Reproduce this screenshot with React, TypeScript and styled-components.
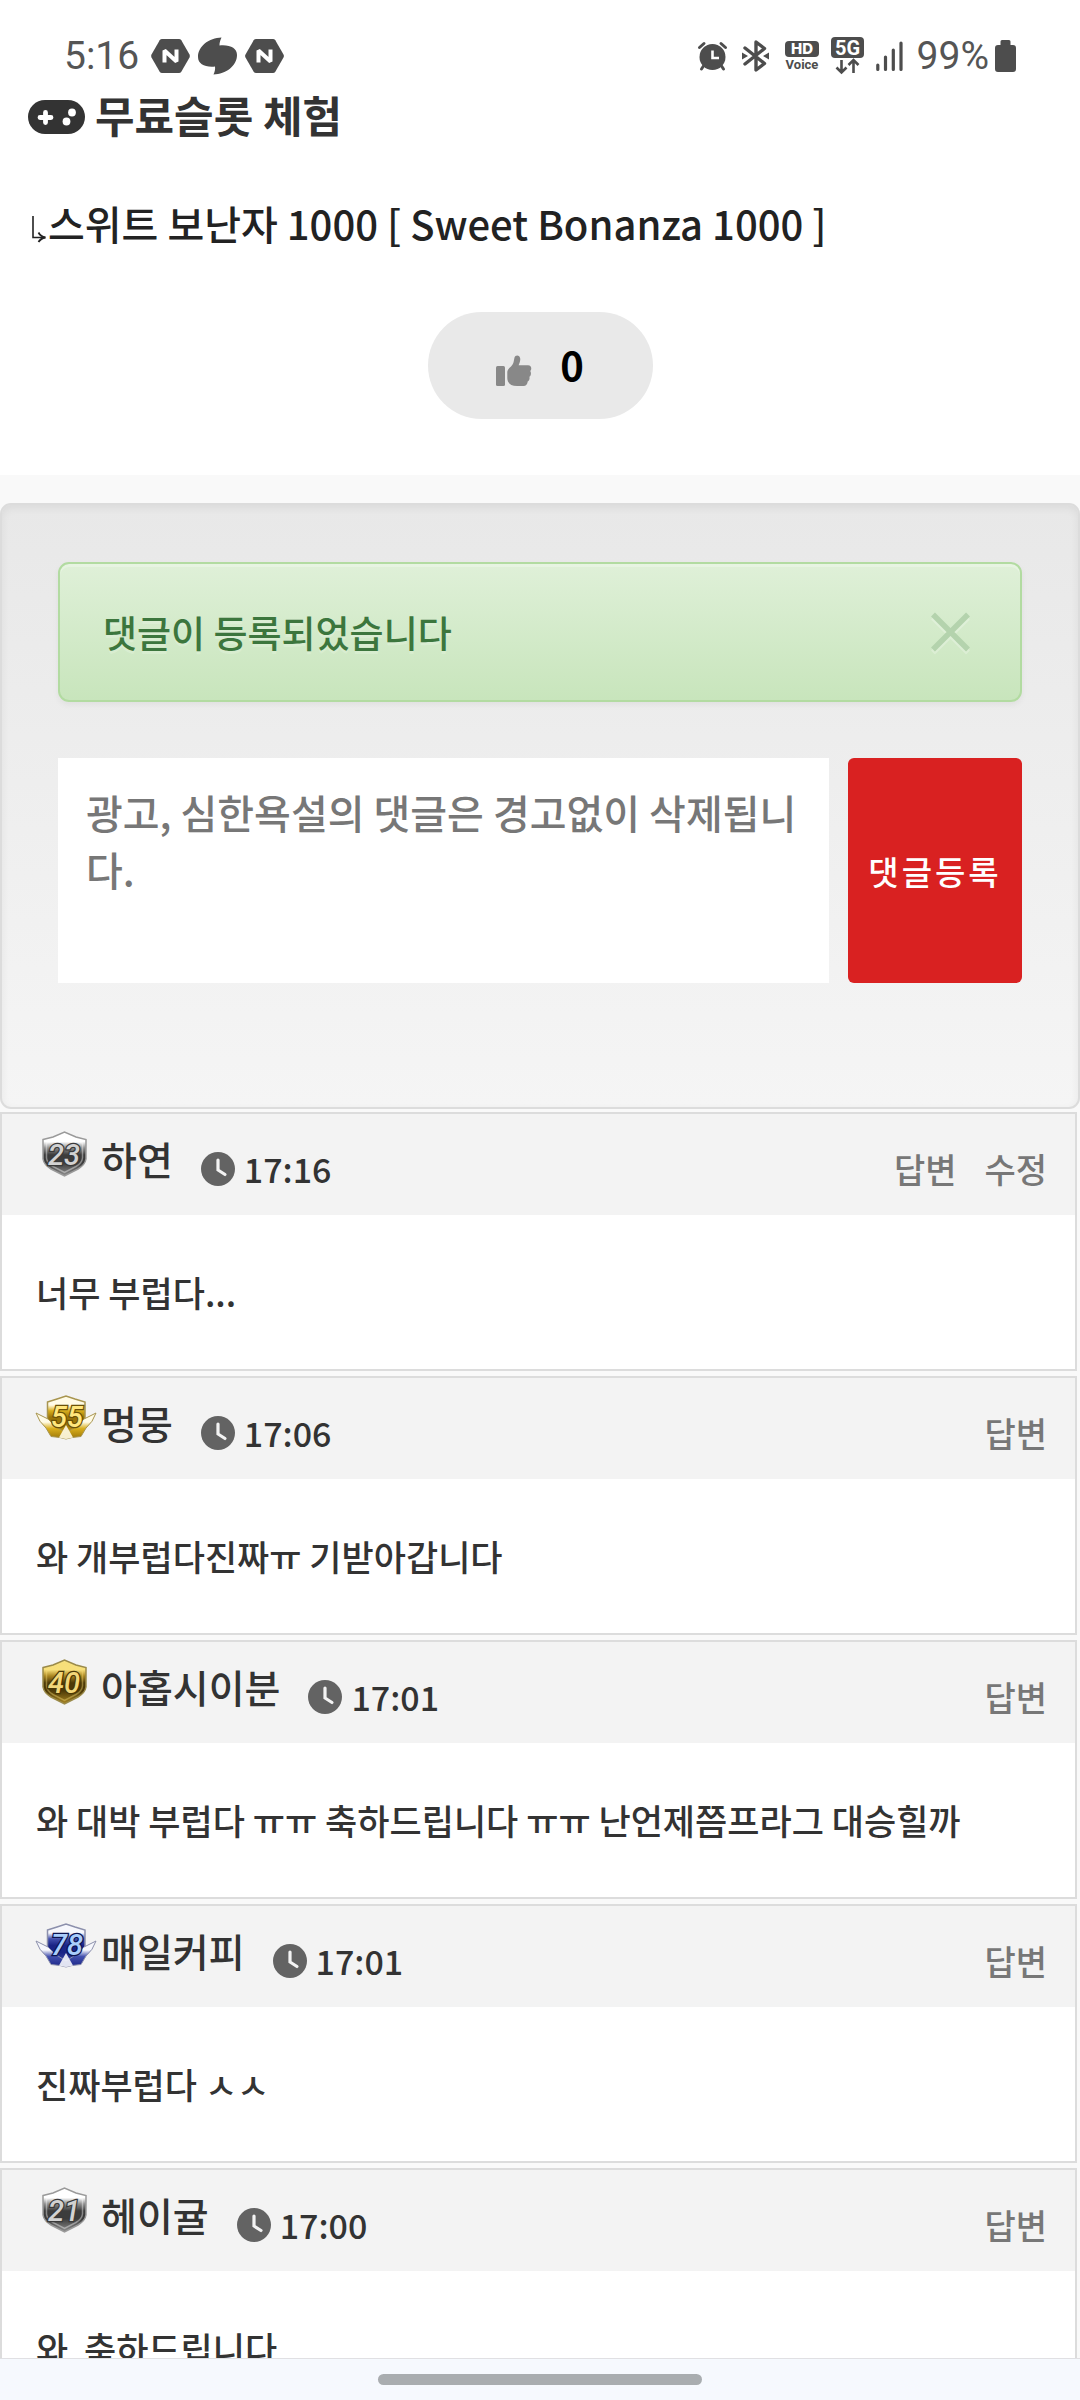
import React from "react";
import styled, { createGlobalStyle } from "styled-components";

const GlobalStyle = createGlobalStyle`
  *, *::before, *::after { box-sizing: border-box; }
  body {
    margin: 0;
    background: #f9f9f9;
    color: #333;
    font-family: "Noto Sans CJK KR", "Noto Sans", sans-serif;
    font-weight: 500;
  }
  button, textarea { font: inherit; }
`;

const Screen = styled.div`
  display: flex;
  flex-direction: column;
  height: 100vh;
  overflow: hidden;
`;

const Scroller = styled.main`
  flex: 1;
  min-height: 0;
  overflow: hidden;
`;

/* ---------- status bar ---------- */

const StatusBar = styled.header`
  display: flex;
  justify-content: space-between;
  align-items: center;
  height: 80px;
  padding: 32px 64px 0;
  background: #fff;
  color: #555;
  font-family: Roboto, sans-serif;
  font-size: 39px;
  font-weight: 400;
  line-height: 40px;
`;

const StatusGroup = styled.div<{ $gap: number }>`
  display: flex;
  align-items: center;
  gap: ${(p) => p.$gap}px;
`;

const Glyph = styled.svg`
  display: block;
  flex: none;
  overflow: visible;
`;

const HexN = () => (
  <Glyph width="39" height="36" viewBox="0 0 39 36" aria-hidden="true">
    <path
      d="M11 1h17q1.500 0 2.300 1.300L38.500 16.500q.8 1.500 0 3L30.300 33.700Q29.500 35 28 35H11q-1.500 0-2.300-1.300L.5 19.500q-.8-1.500 0-3L8.700 2.300Q9.500 1 11 1z"
      fill="#4d4d4d"
    />
    <path d="M13.500 24.500V12.500L25.500 23.500V11.500" fill="none" stroke="#fff" strokeWidth="4" strokeLinejoin="bevel" />
  </Glyph>
);

const Swirl = () => (
  <Glyph width="39" height="38" viewBox="0 0 39 38" aria-hidden="true">
    <path
      d="M23.500.5C22 3.500 21.500 6 21.500 8.500C32 7.500 39 11 39 18C39 29 28 37 15.500 37.500C17 34.500 17.300 32 17 29.500C7 30.500 0 27 0 20C0 9 11 1 23.500.5z"
      fill="#4d4d4d"
    />
  </Glyph>
);

const AlarmIcon = () => (
  <Glyph width="32" height="30" viewBox="0 0 32 30" aria-hidden="true">
    <g fill="none" stroke="#4d4d4d" strokeWidth="3" strokeLinecap="round">
      <path d="M1.500 6.500L6 2.500M27.500 6.500L23 2.500M5.500 25L3.500 28M23.500 25L25.500 28" />
    </g>
    <circle cx="14.500" cy="16" r="13" fill="#4d4d4d" />
    <path d="M14.500 9.500V17H21" fill="none" stroke="#fff" strokeWidth="2.600" />
  </Glyph>
);

const BluetoothIcon = () => (
  <Glyph width="31" height="32" viewBox="0 0 31 32" aria-hidden="true">
    <path
      d="M3 8L22.500 23.500L14 30V2L22.500 8.500L3 24"
      fill="none"
      stroke="#4d4d4d"
      strokeWidth="3.400"
      strokeLinejoin="round"
      strokeLinecap="round"
    />
    <path d="M0 12.500L6 16L0 19.500zM27 12.500L21 16L27 19.500z" fill="#4d4d4d" />
  </Glyph>
);

const HdVoiceIcon = () => (
  <Glyph width="34" height="30" viewBox="0 0 34 30" role="img" aria-label="HD Voice">
    <rect width="34" height="16" rx="4" fill="#4d4d4d" />
    <text x="17" y="13" textAnchor="middle" fontFamily="Inter, Roboto" fontSize="15" fontWeight="800" fill="#fff">
      HD
    </text>
    <text x="17" y="28" textAnchor="middle" fontFamily="Roboto, sans-serif" fontSize="13" fontWeight="700" fill="#4d4d4d">
      Voice
    </text>
  </Glyph>
);

const FiveGIcon = () => (
  <Glyph width="33" height="40" viewBox="0 0 33 40" role="img" aria-label="5G">
    <rect y="1" width="33" height="21" rx="4" fill="#4d4d4d" />
    <text x="16.500" y="18.500" textAnchor="middle" fontFamily="Roboto, sans-serif" fontSize="20" fontWeight="700" fill="#fff">
      5G
    </text>
    <path
      d="M10.500 24V36M5.500 31.500L10.500 36.500L15.500 31.500M22.500 37V25M17.500 29L22.500 24L27.500 29"
      fill="none"
      stroke="#4d4d4d"
      strokeWidth="2.600"
    />
  </Glyph>
);

const SignalIcon = () => (
  <Glyph width="29" height="30" viewBox="0 0 29 30" aria-hidden="true">
    <path
      d="M1.800 28.500V24M9.500 28.500V16M17.300 28.500V9M25 28.500V2"
      stroke="#4d4d4d"
      strokeWidth="3.200"
      strokeLinecap="round"
    />
  </Glyph>
);

const BatteryIcon = () => (
  <Glyph width="21" height="32" viewBox="0 0 21 32" aria-hidden="true">
    <path
      d="M7 0h7q1.500 0 1.500 1.500V5H18q3 0 3 3v21q0 3-3 3H3q-3 0-3-3V8q0-3 3-3h2.500V1.500Q5.500 0 7 0z"
      fill="#4d4d4d"
    />
  </Glyph>
);

/* ---------- post ---------- */

const Post = styled.section`
  padding: 0 28px 56px;
  background: #fff;
`;

const BoardTitle = styled.h1`
  display: flex;
  align-items: center;
  gap: 10px;
  margin: 0;
  font-size: 43px;
  font-weight: 700;
  line-height: 68px;
`;

const PadIcon = () => (
  <Glyph width="57" height="40" viewBox="0 0 57 40" aria-hidden="true">
    <rect y="6" width="57" height="34" rx="17" fill="#333" />
    <path d="M17.500 18.500V28.500M12 23.500H23" stroke="#fff" strokeWidth="4.800" strokeLinecap="round" />
    <circle cx="44" cy="18.500" r="3.900" fill="#fff" />
    <circle cx="38.500" cy="27.500" r="3.900" fill="#fff" />
  </Glyph>
);

const PostTitle = styled.h2`
  display: flex;
  align-items: center;
  margin: 45px 0 59px;
  padding-left: 4px;
  color: #222;
  font-size: 40px;
  font-weight: 500;
  line-height: 60px;
`;

const ReplyArrow = () => (
  <Glyph width="16" height="40" viewBox="0 0 16 40" aria-hidden="true">
    <path d="M1 13V34.500H13" fill="none" stroke="#222" strokeWidth="1.600" />
    <path d="M6.500 29.500Q8.500 33.500 13.500 34.500Q8.500 35.500 6.500 39" fill="none" stroke="#222" strokeWidth="1.800" />
  </Glyph>
);

const LikeButton = styled.button`
  display: flex;
  justify-content: center;
  align-items: center;
  gap: 28px;
  width: 225px;
  height: 107px;
  margin: 0 auto;
  padding: 0;
  border: 0;
  border-radius: 54px;
  background: #e9e9e9;
  color: #000;
  font-size: 40px;
  font-weight: 700;
  line-height: 54px;
`;

const LikeCount = styled.span`
  padding-bottom: 4px;
`;

const ThumbIcon = () => (
  <Glyph width="36" height="41" viewBox="0 -10 36 41" aria-hidden="true">
    <rect y="11" width="9" height="20" rx="1.500" fill="#888" />
    <path
      d="M11.300 17C11.500 13 16.500 12 17.600 7L18.500 2.500C19.200-.3 24-.5 24.300 4C24.300 7 23 9 22.600 10.300H32C36 10.300 35.800 15 34.200 16C35.500 17.500 35 21 33.400 21.700C34 24 33 26 31.700 26.500C31.500 29 30 31 27.500 31H21C15 31 11.300 28 11.300 23z"
      fill="#888"
    />
  </Glyph>
);

/* ---------- write form ---------- */

const Well = styled.section`
  margin-top: 28px;
  padding: 57px 56px 124px;
  border: 2px solid #dcdcdc;
  border-radius: 11px;
  background: linear-gradient(to bottom, #e8e8e8 0%, #f5f5f5 100%);
  box-shadow: inset 0 3px 9px rgba(0, 0, 0, 0.06);
`;

const Alert = styled.div`
  display: flex;
  justify-content: space-between;
  align-items: center;
  height: 140px;
  margin-bottom: 56px;
  padding: 0 49px 0 43px;
  border: 2px solid #b2dba1;
  border-radius: 11px;
  background: linear-gradient(to bottom, #dff0d8 0%, #c8e5bc 100%);
  box-shadow: inset 0 3px 0 rgba(255, 255, 255, 0.25), 0 3px 6px rgba(0, 0, 0, 0.05);
  color: #3c763d;
  font-size: 37px;
  line-height: 54px;
  text-shadow: 0 3px 0 rgba(255, 255, 255, 0.2);
`;

const CloseButton = styled.button`
  display: flex;
  padding: 0;
  border: 0;
  background: none;
`;

const CloseIcon = () => (
  <Glyph width="41" height="41" viewBox="0 0 41 41" aria-hidden="true">
    <path d="M3 5.500L38 40.500M38 5.500L3 40.500" stroke="#fff" strokeOpacity=".25" strokeWidth="5.500" />
    <path d="M3 2.500L38 37.500M38 2.500L3 37.500" stroke="#b4d3ad" strokeWidth="5.500" />
  </Glyph>
);

const WriteForm = styled.form`
  display: flex;
  gap: 19px;
`;

const CommentInput = styled.textarea`
  flex: 1;
  min-width: 0;
  height: 225px;
  padding: 26px 28px;
  border: 0;
  outline: 0;
  background: #fff;
  color: #555;
  font-size: 40px;
  line-height: 57px;
  resize: none;
  &::placeholder {
    color: #777;
    opacity: 1;
  }
`;

const SubmitButton = styled.button`
  width: 174px;
  padding: 0;
  border: 0;
  border-radius: 6px;
  background: #d92121;
  color: #fff;
  font-size: 33px;
  letter-spacing: 3px;
  line-height: 54px;
`;

/* ---------- comments ---------- */

const CommentList = styled.ul`
  display: flex;
  flex-direction: column;
  gap: 5px;
  margin: 3px 3px 0 0;
  padding: 0;
  list-style: none;
`;

const Comment = styled.li`
  border: 2px solid #dcdcdc;
  background: #fff;
`;

const CommentHeader = styled.div`
  display: flex;
  align-items: center;
  height: 101px;
  padding: 0 28px 0 33px;
  background: #f3f3f3;
`;

const Author = styled.div`
  display: flex;
  align-self: flex-start;
  gap: 4px;
  padding-top: 17px;
  font-size: 39px;
  line-height: 54px;
`;

const Posted = styled.div`
  display: flex;
  align-items: center;
  gap: 9px;
  margin-left: 28px;
  padding-top: 9px;
  font-size: 34px;
  line-height: 54px;
`;

const Actions = styled.nav`
  display: flex;
  gap: 28px;
  margin-left: auto;
  padding-top: 9px;
`;

const Action = styled.a`
  color: #777;
  font-size: 34px;
  line-height: 54px;
  text-decoration: none;
`;

const CommentText = styled.p`
  margin: 0;
  padding: 50px 34px;
  font-size: 35px;
  line-height: 54px;
  white-space: pre-wrap;
`;

const ClockIcon = () => (
  <Glyph width="34" height="34" viewBox="0 0 34 34" aria-hidden="true">
    <circle cx="17" cy="17" r="17" fill="#636363" />
    <path d="M17 8V18L24 22.500" fill="none" stroke="#f3f3f3" strokeWidth="3.200" strokeLinecap="round" />
  </Glyph>
);

type Tone = "silver" | "gold" | "bronze" | "blue";

const tones: Record<Tone, { rim: string; top: string; mid: string; low: string; digit: string; line: string }> = {
  silver: { rim: "#9a9a9a", top: "#ffffff", mid: "#3c3c3c", low: "#8f8f8f", digit: "#d2d2d2", line: "#3a3a3a" },
  gold: { rim: "#a89550", top: "#fffbe6", mid: "#9a7508", low: "#d9ae1c", digit: "#ffe77e", line: "#6b5108" },
  bronze: { rim: "#9a8a4a", top: "#f7df7a", mid: "#4d3a08", low: "#ab8722", digit: "#f2d77a", line: "#4a3805" },
  blue: { rim: "#8c90ac", top: "#f6f7fc", mid: "#1a2486", low: "#4350ae", digit: "#a9cdfb", line: "#0c1450" },
};

const LevelBadge = ({ level, tone, winged }: { level: number; tone: Tone; winged?: boolean }) => {
  const c = tones[tone];
  const id = `badge-${level}`;
  return (
    <Glyph width="62" height="46" viewBox="0 0 62 46" role="img" aria-label={`Lv.${level}`}>
      <defs>
        <linearGradient id={id} x1="0" y1="0" x2="0" y2="1">
          <stop offset="0" stopColor={c.top} />
          <stop offset=".22" stopColor={c.top} />
          <stop offset=".36" stopColor={c.low} />
          <stop offset=".52" stopColor={c.mid} />
          <stop offset=".7" stopColor={c.mid} />
          <stop offset="1" stopColor={c.low} />
        </linearGradient>
        <linearGradient id={`${id}-wing`} x1="0" y1="0" x2="0" y2="1">
          <stop offset="0" stopColor={c.top} />
          <stop offset=".35" stopColor={c.top} />
          <stop offset=".6" stopColor={c.low} />
          <stop offset="1" stopColor={c.mid} />
        </linearGradient>
      </defs>
      {winged ? (
        <>
          <path
            d="M12.500 7L22 4L31 1L40 4L50 7V28L42 37L31 42L20 37L12.500 28z"
            fill={`url(#${id})`}
            stroke={c.rim}
            strokeWidth="1.500"
          />
          <path
            d="M1 18L13 24L20 31L31 38L42 31L49 24L61 18Q58 27 51 33L46 41.500L37 42.500L31 44L25 42.500L16 41.500L11 33Q4 27 1 18z"
            fill={`url(#${id}-wing)`}
            stroke={c.rim}
            strokeWidth="1"
          />
          <path d="M31 30L38 42.500L31 44L24 42.500z" fill={c.top} fillOpacity=".9" />
        </>
      ) : (
        <>
          <path
            d="M8 8.500L18 6L29.500 1L41 6L51 8.500V28Q50 34 43 38L29.500 45L16 38Q9 34 8 28z"
            fill={`url(#${id})`}
            stroke={c.rim}
            strokeWidth="1.500"
          />
          <path
            d="M11.500 12L20 9.500L29.500 5.500L39 9.500L47.500 12V27Q47 32 41 35.500L29.500 41.500L18 35.500Q12 32 11.500 27z"
            fill="none"
            stroke={c.top}
            strokeOpacity=".4"
            strokeWidth="1.500"
          />
        </>
      )}
      <text
        x={winged ? 32 : 29}
        y={winged ? 32 : 34}
        textAnchor="middle"
        fontFamily="Roboto, sans-serif"
        fontStyle="italic"
        fontSize="29"
        fontWeight="500"
        fill={c.digit}
        stroke={c.line}
        strokeWidth="2.500"
        paintOrder="stroke"
      >
        {level}
      </text>
    </Glyph>
  );
};

/* ---------- system navigation ---------- */

const GestureBar = styled.footer`
  display: flex;
  justify-content: center;
  align-items: center;
  flex: none;
  height: 42px;
  border-top: 1px solid #e0e0e3;
  background: #f6f9fe;
`;

const GestureHandle = styled.div`
  width: 30%;
  height: 11px;
  border-radius: 6px;
  background: #a9adb0;
`;

interface CommentData {
  level: number;
  tone: Tone;
  winged?: boolean;
  name: string;
  time: string;
  text: string;
  actions: string[];
}

const comments: CommentData[] = [
  { level: 23, tone: "silver", name: "하연", time: "17:16", text: "너무 부럽다...", actions: ["답변", "수정"] },
  { level: 55, tone: "gold", winged: true, name: "멍뭉", time: "17:06", text: "와 개부럽다진짜ㅠ 기받아갑니다", actions: ["답변"] },
  { level: 40, tone: "bronze", name: "아홉시이분", time: "17:01", text: "와 대박 부럽다 ㅠㅠ 축하드립니다 ㅠㅠ 난언제쯤프라그 대승힐까", actions: ["답변"] },
  { level: 78, tone: "blue", winged: true, name: "매일커피", time: "17:01", text: "진짜부럽다 ㅅㅅ", actions: ["답변"] },
  { level: 21, tone: "silver", name: "헤이귤", time: "17:00", text: "와  축하드립니다", actions: ["답변"] },
];

export default function App() {
  return (
    <Screen>
      <GlobalStyle />
      <StatusBar>
        <StatusGroup $gap={8}>
          <StatusGroup $gap={12}>
            <span>5:16</span>
            <HexN />
          </StatusGroup>
          <Swirl />
          <HexN />
        </StatusGroup>
        <StatusGroup $gap={12}>
          <AlarmIcon />
          <BluetoothIcon />
          <HdVoiceIcon />
          <FiveGIcon />
          <SignalIcon />
          <StatusGroup $gap={6}>
            <span>99%</span>
            <BatteryIcon />
          </StatusGroup>
        </StatusGroup>
      </StatusBar>

      <Scroller>
        <Post>
          <BoardTitle>
            <PadIcon />
            무료슬롯 체험
          </BoardTitle>
          <PostTitle>
            <ReplyArrow />
            스위트 보난자 1000 [ Sweet Bonanza 1000 ]
          </PostTitle>
          <LikeButton type="button" aria-label="추천 0">
            <ThumbIcon />
            <LikeCount>0</LikeCount>
          </LikeButton>
        </Post>

        <Well>
          <Alert role="alert">
            <span>댓글이 등록되었습니다</span>
            <CloseButton type="button" aria-label="닫기">
              <CloseIcon />
            </CloseButton>
          </Alert>
          <WriteForm onSubmit={(e) => e.preventDefault()}>
            <CommentInput aria-label="댓글" placeholder="광고, 심한욕설의 댓글은 경고없이 삭제됩니다." />
            <SubmitButton type="submit">댓글등록</SubmitButton>
          </WriteForm>
        </Well>

        <CommentList>
          {comments.map((c) => (
            <Comment key={c.level}>
              <CommentHeader>
                <Author>
                  <LevelBadge level={c.level} tone={c.tone} winged={c.winged} />
                  <span>{c.name}</span>
                </Author>
                <Posted>
                  <ClockIcon />
                  <time>{c.time}</time>
                </Posted>
                <Actions>
                  {c.actions.map((a) => (
                    <Action key={a} href="#">
                      {a}
                    </Action>
                  ))}
                </Actions>
              </CommentHeader>
              <CommentText>{c.text}</CommentText>
            </Comment>
          ))}
        </CommentList>
      </Scroller>

      <GestureBar>
        <GestureHandle />
      </GestureBar>
    </Screen>
  );
}
